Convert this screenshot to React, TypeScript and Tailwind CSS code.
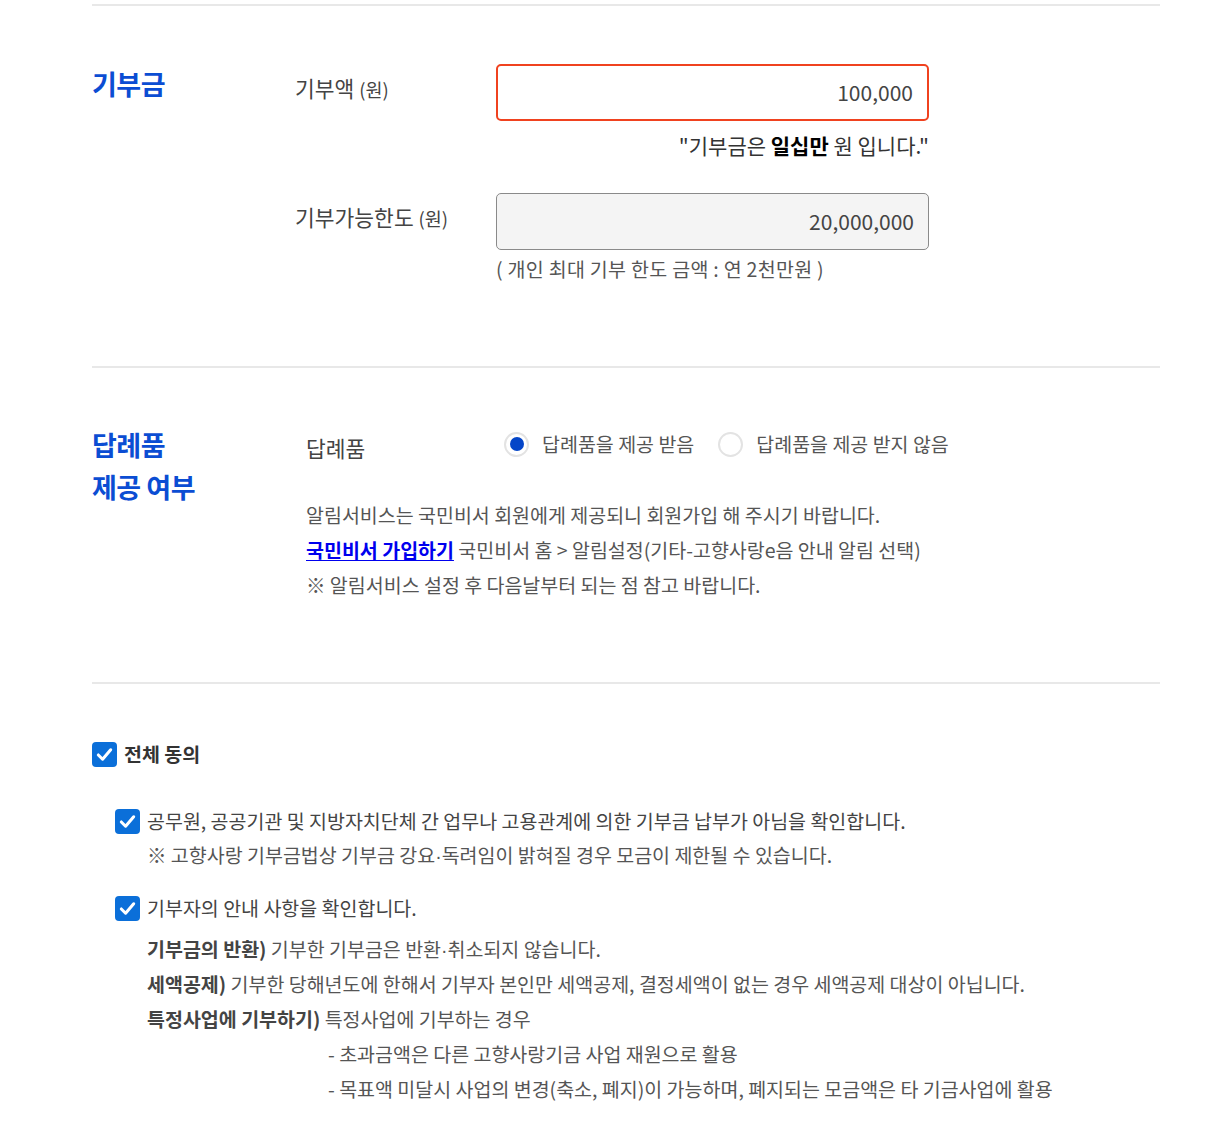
const font = { fontFamily: '"Noto Sans CJK KR", "Noto Sans", sans-serif' };

const Check = ({ className = "" }: { className?: string }) => (
  <span
    className={`flex h-[25px] w-[25px] shrink-0 items-center justify-center rounded-[4px] bg-[#0b6fd9] ${className}`}
  >
    <svg width="19" height="19" viewBox="0 0 20 20" fill="none">
      <path
        d="M3.5 10.5 L8 15 L16.5 5"
        stroke="white"
        strokeWidth="3.2"
        strokeLinecap="round"
        strokeLinejoin="round"
      />
    </svg>
  </span>
);

const Radio = ({ checked }: { checked?: boolean }) => (
  <span className="flex h-[25px] w-[25px] shrink-0 items-center justify-center rounded-full border-2 border-[#e3e3e3] bg-white">
    {checked && <span className="h-[14px] w-[14px] rounded-full bg-[#0445c8]" />}
  </span>
);

const Dot = () => <span className="font-['Liberation_Sans'] leading-none">·</span>;

export default function App() {
  return (
    <div className="min-h-[1125px] bg-white text-[#444]" style={font}>
      <div className="ml-[92px] w-[1068px]">
        <div className="mt-[4px] h-[2px] bg-[#e8e8e8]" />

        {/* 기부금 */}
        <section className="flex pt-[58px] pb-[82px]">
          <h2 className="w-[203px] shrink-0 text-[27px] font-bold leading-[40px] tracking-[-0.5px] text-[#0b4dd3]">
            기부금
          </h2>
          <div>
            <div className="flex">
              <div className="w-[201px] text-[21.5px] leading-[48px] text-[#444]">
                기부액 <span className="text-[18.5px]">(원)</span>
              </div>
              <div>
                <div className="flex h-[57px] w-[433px] items-center justify-end rounded-[5px] border-2 border-[#f0421f] px-[14px] text-[21px] text-[#444]">
                  100,000
                </div>
                <p className="mt-[9px] text-right text-[21px] leading-[30px] text-[#333]">
                  "기부금은 <b className="text-black">일십만</b> 원 입니다."
                </p>
              </div>
            </div>
            <div className="mt-[33px] flex">
              <div className="w-[201px] text-[21.5px] leading-[48px] text-[#444]">
                기부가능한도 <span className="text-[18.5px]">(원)</span>
              </div>
              <div>
                <div className="flex h-[57px] w-[433px] items-center justify-end rounded-[5px] border border-[#8a8a8a] bg-[#f4f4f4] px-[14px] text-[21px] text-[#444]">
                  20,000,000
                </div>
                <p className="mt-[4px] text-[19.5px] leading-[30px] tracking-[0.3px] text-[#555]">
                  ( 개인 최대 기부 한도 금액 : 연 2천만원 )
                </p>
              </div>
            </div>
          </div>
        </section>

        <div className="h-[2px] bg-[#e8e8e8]" />

        {/* 답례품 */}
        <section className="flex pt-[56px] pb-[80px]">
          <h2 className="w-[214px] shrink-0 text-[27px] font-bold leading-[42px] tracking-[-0.5px] text-[#0b4dd3]">
            답례품
            <br />
            제공 여부
          </h2>
          <div>
            <div className="flex h-[40px] items-center">
              <div className="w-[198px] pt-[9px] text-[21.5px] text-[#444]">답례품</div>
              <label className="flex items-center gap-[13px] text-[19.5px] text-[#555]">
                <Radio checked />
                답례품을 제공 받음
              </label>
              <label className="ml-[24px] flex items-center gap-[13px] text-[19.5px] text-[#555]">
                <Radio />
                답례품을 제공 받지 않음
              </label>
            </div>
            <div className="mt-[33px] text-[19.5px] leading-[35px] text-[#555]">
              <p>알림서비스는 국민비서 회원에게 제공되니 회원가입 해 주시기 바랍니다.</p>
              <p>
                <a className="font-bold text-[#0000ee] underline underline-offset-2">
                  국민비서 가입하기
                </a>{" "}
                국민비서 홈 &gt; 알림설정(기타-고향사랑e음 안내 알림 선택)
              </p>
              <p>※ 알림서비스 설정 후 다음날부터 되는 점 참고 바랍니다.</p>
            </div>
          </div>
        </section>

        <div className="h-[2px] bg-[#e8e8e8]" />

        {/* 약관 동의 */}
        <section className="pt-[57px] pb-[20px] text-[19.5px] text-[#444]">
          <label className="flex h-[26px] items-center gap-[7px]">
            <Check />
            <span className="font-bold text-[#333]">전체 동의</span>
          </label>

          <div className="ml-[23px] mt-[37px]">
            <label className="flex items-center gap-[7px] leading-[34px]">
              <Check />
              <span>공무원, 공공기관 및 지방자치단체 간 업무나 고용관계에 의한 기부금 납부가 아님을 확인합니다.</span>
            </label>
            <p className="ml-[32px] leading-[34px] text-[#555]">
              ※ 고향사랑 기부금법상 기부금 강요<Dot />독려임이 밝혀질 경우 모금이 제한될 수 있습니다.
            </p>

            <label className="mt-[19px] flex items-center gap-[7px] leading-[34px]">
              <Check />
              <span>기부자의 안내 사항을 확인합니다.</span>
            </label>
            <div className="ml-[32px] mt-[6px] leading-[35px] text-[#555]">
              <p>
                <span className="font-semibold text-[#444]">기부금의 반환)</span> 기부한 기부금은 반환<Dot />취소되지 않습니다.
              </p>
              <p>
                <span className="font-semibold text-[#444]">세액공제)</span> 기부한 당해년도에 한해서 기부자 본인만 세액공제, 결정세액이 없는 경우 세액공제 대상이 아닙니다.
              </p>
              <p>
                <span className="font-semibold text-[#444]">특정사업에 기부하기)</span> 특정사업에 기부하는 경우
              </p>
              <div className="pl-[181px]">
                <p>- 초과금액은 다른 고향사랑기금 사업 재원으로 활용</p>
                <p>- 목표액 미달시 사업의 변경(축소, 폐지)이 가능하며, 폐지되는 모금액은 타 기금사업에 활용</p>
              </div>
            </div>
          </div>
        </section>
      </div>
    </div>
  );
}
